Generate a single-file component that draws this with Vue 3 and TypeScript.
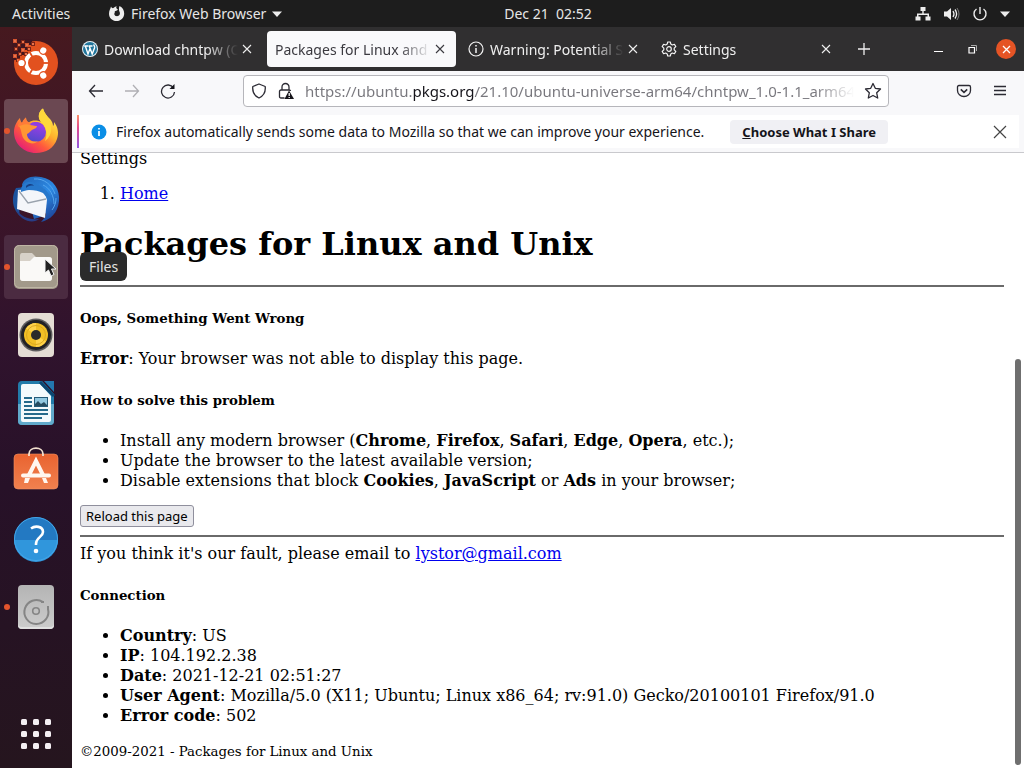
<script setup lang="ts">
import { ref } from 'vue'

interface Tab {
  id: string
  title: string
  icon: 'wordpress' | 'info' | 'gear' | null
}

interface Detail {
  label: string
  value: string
}

const tabs: Tab[] = [
  { id: 'download', title: 'Download chntpw (Offline', icon: 'wordpress' },
  { id: 'packages', title: 'Packages for Linux and Unix', icon: null },
  { id: 'warning', title: 'Warning: Potential Security', icon: 'info' },
  { id: 'settings', title: 'Settings', icon: 'gear' },
]
const activeTab = ref('packages')
const address = ref('https://ubuntu.pkgs.org/21.10/ubuntu-universe-arm64/chntpw_1.0-1.1_arm64.deb.html')

const details: Detail[] = [
  { label: 'Country', value: 'US' },
  { label: 'IP', value: '104.192.2.38' },
  { label: 'Date', value: '2021-12-21 02:51:27' },
  { label: 'User Agent', value: 'Mozilla/5.0 (X11; Ubuntu; Linux x86_64; rv:91.0) Gecko/20100101 Firefox/91.0' },
  { label: 'Error code', value: '502' },
]

const pixels: number[][] = [
  [2, 0], [10, 1], [6, 4], [14, 4], [20, 3], [3, 8], [10, 9], [16, 8], [7, 13], [2, 15], [13, 13], [5, 19],
]
const gridDots: number[] = [0, 12, 24]
const spokes: number[] = [0, 120, 240]
</script>

<template>
  <div class="desktop">
    <header class="topbar">
      <button class="top-item activities">Activities</button>
      <button class="top-item app-menu">
        <svg width="17" height="17" viewBox="0 0 17 17" aria-hidden="true">
          <path d="M3 1.500C3.500 2.500 4 3 5 3.200C6.500 2 8 1.500 8.800 1.300C8 2.300 8.200 3 8.600 3.600L10 4.800L8.300 5.800C7 6 6.500 6.600 6.800 7.500C5.500 9.500 7 11.200 9 11.200C11.500 11.200 12.600 9 11.500 6.800C11 5.500 10.500 3.500 11.500 1C14.500 2.500 16.300 5 16.200 8.700C16 13 12.700 16 8.600 16C4.400 16 1 13 1 8.700C1 5.500 2.500 4 3 1.500Z" fill="#ededed" />
        </svg>
        <span>Firefox Web Browser</span>
        <svg width="10" height="6" viewBox="0 0 10 6" aria-hidden="true"><path d="M0 0.500H10L5 6Z" fill="#ededed" /></svg>
      </button>
      <button class="top-item clock">Dec 21&nbsp; 02:52</button>
      <button class="top-item system" aria-label="System menu">
        <svg width="16" height="16" viewBox="0 0 16 16" fill="#ededed" aria-hidden="true">
          <path d="M5.500 1h5v4h-1.800v2.500H14v3h1.500v4h-5v-4h2V9H3.500v1.500h2v4h-5v-4H2v-3h5.300V5H5.500Z" />
        </svg>
        <svg width="17" height="16" viewBox="0 0 17 16" aria-hidden="true">
          <path d="M1 5.500H4L8 2V14L4 10.500H1Z" fill="#ededed" />
          <path d="M10 5Q12 8 10 11M12 3.500Q15.200 8 12 12.500" fill="none" stroke="#ededed" stroke-width="1.300" />
          <path d="M14 2Q18 8 14 14" fill="none" stroke="#777" stroke-width="1" />
        </svg>
        <svg width="16" height="16" viewBox="0 0 16 16" fill="none" stroke="#ededed" stroke-width="1.400" aria-hidden="true">
          <path d="M8 1V8M4.500 3A6 6 0 1 0 11.500 3" />
        </svg>
        <svg width="10" height="6" viewBox="0 0 10 6" aria-hidden="true"><path d="M0 0.500H10L5 6Z" fill="#ededed" /></svg>
      </button>
    </header>

    <div class="workspace">
      <nav class="dock" aria-label="Dock">
        <button class="tile" aria-label="Ubuntu">
          <svg width="48" height="48" viewBox="0 0 48 48">
            <circle cx="24" cy="24" r="22" fill="#e2511f" />
            <path d="M0 0H20V6H16V11H12V16H8V21H0Z" fill="#42161f" />
            <g v-for="(p, i) in pixels" :key="i">
              <rect :x="p[0] - 1" :y="p[1]" width="4" height="4" :fill="i % 3 === 0 ? '#d3542f' : '#7d2416'" />
              <rect :x="p[0]" :y="p[1] + 1" width="2" height="2" fill="#e8734b" />
            </g>
            <circle cx="24" cy="24" r="10" fill="none" stroke="#fff" stroke-width="4" />
            <g v-for="a in spokes" :key="a" :transform="`rotate(${a} 24 24)`">
              <circle cx="9.500" cy="24" r="4.500" fill="#e2511f" />
              <circle cx="9.500" cy="24" r="3.100" fill="#fff" />
              <path d="M31 24H38" stroke="#e2511f" stroke-width="1.800" />
            </g>
          </svg>
        </button>

        <button class="tile running bright" aria-label="Firefox Web Browser">
          <svg width="48" height="48" viewBox="0 0 48 48">
            <defs>
              <linearGradient id="foxBody" x1=".85" y1=".1" x2=".2" y2=".95">
                <stop offset="0" stop-color="#fff04d" /><stop offset=".38" stop-color="#ffb22c" />
                <stop offset=".67" stop-color="#ff593d" /><stop offset="1" stop-color="#e51c79" />
              </linearGradient>
              <linearGradient id="foxGlobe" x1=".7" y1="0" x2=".4" y2="1">
                <stop offset="0" stop-color="#a63cea" /><stop offset="1" stop-color="#5149cb" />
              </linearGradient>
            </defs>
            <path d="M8 11C8 14 9 15 10 16C11 14 12 12 14 10.500C14 13 15 15 17 15.500C20 13 25 13 29 15C25 10 27 4 31 1.500C32 6 35 9 38 12C40 14 41 17 41 19C42 18 42 17 42 15C46 20 47 26 45 32C42 41 34 46 24 46C12 46 2 37 2 25C2 19 5 14 8 11Z" fill="url(#foxBody)" />
            <circle cx="24" cy="25" r="10" fill="url(#foxGlobe)" />
            <path d="M6 18C10 15 15 15 18 18L25 19C25 21 22 22 20 23C18 24 18 26 15 27C15 33 21 36 26 34C22 39 12 36 10 28C9 24 9 21 6 18Z" fill="#ff9634" />
            <path d="M29 15C25 10 27 4 31 1.500C32 7 39 11 39 20C40 26 37 31 33 34C36 27 34 19 29 15Z" fill="#ffd83b" />
            <path d="M8 11C8 14 9 15 10 16C11 14 12 12 14 10.500C14 13 15 15 17 15.500L19 18C13 16 9 18 6 20Z" fill="#ff7b38" />
            <path d="M18 17C21 14 28 14 32 19C28 17 26 19 25 19Z" fill="#8e3fe0" />
          </svg>
        </button>

        <button class="tile" aria-label="Thunderbird Mail">
          <svg width="48" height="48" viewBox="0 0 48 48">
            <defs>
              <linearGradient id="birdBody" x1=".2" y1="0" x2=".8" y2="1">
                <stop offset="0" stop-color="#2369bc" /><stop offset=".45" stop-color="#2d8ae4" /><stop offset="1" stop-color="#1c3f93" />
              </linearGradient>
            </defs>
            <path d="M4 13C-1 22 0 34 8 41C6 34 8 20 14 12Z" fill="#1c539d" />
            <path d="M10 10C11 3 20 0 29 2C42 4 48 15 47 26C46 38 38 45 29 47C33 43 34 41 34 38C31 41 27 43 22 44L14 15Z" fill="url(#birdBody)" />
            <path d="M4 34C9 42 17 45 27 44C22 49 8 47 4 34Z" fill="#283d86" />
            <path d="M6 15L31 13L35 25L33 43L5 34Z" fill="#f4f6fa" />
            <path d="M7 16L16 28L34 24" fill="none" stroke="#99a2ad" stroke-width="1.300" />
            <path d="M9 17C8 8 18 4 24 9C32 12 38 17 40 28C36 23 34 22 31 18C27 16 23 15 17 15C14 15 12 16 9 17Z" fill="#2778cc" />
            <path d="M14 11C17 8 21 9 22 11C19 10 16 11 14 13Z" fill="#163f85" />
            <path d="M22 4C32 3 40 10 43 19M31 10C38 13 42 21 42 29M40 35C43 31 44 27 44 23" fill="none" stroke="#55a6ef" stroke-width="1" />
          </svg>
        </button>

        <button class="tile running hovered" aria-label="Files" aria-describedby="files-tip">
          <svg width="48" height="48" viewBox="0 0 48 48">
            <rect x="2" y="2" width="44" height="44" rx="5" fill="#a2998a" />
            <rect x="2.500" y="2.500" width="43" height="42" rx="5" fill="none" stroke="#bfb6a5" />
            <path d="M8 13Q8 10 10 10H20L24 14H37Q40 14 40 17V35Q40 38 37 38H11Q8 38 8 35Z" fill="#d7d1c8" />
            <path d="M8 18H18L22 14H37Q40 14 40 17V35Q40 38 37 38H11Q8 38 8 35Z" fill="#faf9f7" />
          </svg>
          <span id="files-tip" class="tooltip" role="tooltip">Files</span>
          <svg class="pointer" width="13" height="19" viewBox="0 0 13 19" aria-hidden="true">
            <path d="M1 1V15L4.500 12L7 18L10 16.500L7.500 11H12Z" fill="#222" stroke="#f4f4f4" stroke-width="1" />
          </svg>
        </button>

        <button class="tile" aria-label="Rhythmbox">
          <svg width="48" height="48" viewBox="0 0 48 48">
            <rect x="6" y="2" width="36" height="44" rx="4" fill="#e4ddd4" />
            <circle cx="24" cy="24" r="16.500" fill="#5d5c5d" /><circle cx="24" cy="24" r="15" fill="#222225" />
            <circle cx="24" cy="24" r="12" fill="#f1bf25" />
            <path d="M24 24L14 17.500A12 12 0 0 1 24 12ZM24 24L34 30.500A12 12 0 0 1 24 36Z" fill="#ffd34a" />
            <circle cx="24" cy="24" r="9.500" fill="none" stroke="#dba91f" />
            <circle cx="24" cy="24" r="5" fill="#2b2a2a" />
          </svg>
        </button>

        <button class="tile" aria-label="LibreOffice Writer">
          <svg width="48" height="48" viewBox="0 0 48 48">
            <path d="M10 2H30L42 15V42Q42 46 38 46H10Q6 46 6 42V6Q6 2 10 2Z" fill="#227baa" />
            <path d="M6 25H42V42Q42 46 38 46H10Q6 46 6 42Z" fill="#61aacb" />
            <path d="M32 2H42V13Z" fill="#2377ae" />
            <path d="M9 7Q9 5 11 5H28L39 17V41Q39 43 37 43H11Q9 43 9 41Z" fill="#f4fafc" />
            <path d="M28 3L42 17" stroke="#0c4670" stroke-width="3" />
            <path d="M12 19H20M12 23H20M12 27H20M12 31H36M12 35H36M12 39H30" stroke="#266a8b" stroke-width="2" />
            <rect x="22.500" y="18.500" width="13" height="9" fill="#92c9e1" stroke="#255b78" />
            <path d="M23 27V25L26 22L29 25L32 23L35 26V27Z" fill="#264d61" />
          </svg>
        </button>

        <button class="tile" aria-label="Ubuntu Software">
          <svg width="48" height="48" viewBox="0 0 48 48">
            <defs><linearGradient id="bag" x1="0" y1="0" x2="0" y2="1"><stop offset="0" stop-color="#e96330" /><stop offset="1" stop-color="#f0814f" /></linearGradient></defs>
            <rect x="2" y="7" width="44" height="35" rx="4" fill="url(#bag)" stroke="#f29162" stroke-width=".6" />
            <path d="M17 9V7C17 -.8 31 -.8 31 7V9" fill="none" stroke="#f1dfcd" stroke-width="1.800" />
            <path d="M17 28L24 14L31 28" fill="none" stroke="#fff7f0" stroke-width="4" />
            <path d="M11 28.500H37" stroke="#fff7f0" stroke-width="4" stroke-linecap="round" />
            <path d="M13 31L12 36H16L18 31ZM30 31L32 36H36L34 31Z" fill="#fff7f0" />
          </svg>
        </button>

        <button class="tile" aria-label="Help">
          <svg width="48" height="48" viewBox="0 0 48 48">
            <circle cx="24" cy="24" r="22" fill="#2379c2" />
            <path d="M2 25H46A22 22 0 0 1 2 25Z" fill="#3096dc" />
            <circle cx="24" cy="24" r="21.500" fill="none" stroke="#43a6e8" />
            <path d="M19 13.500C23 10.500 31 11 31 17C31 22 24 22 24 29V30" fill="none" stroke="#fff" stroke-width="2.600" />
            <circle cx="24" cy="36" r="2.300" fill="#fff" />
          </svg>
        </button>

        <button class="tile running" aria-label="Disk">
          <svg width="48" height="48" viewBox="0 0 48 48">
            <defs><linearGradient id="disk" x1="0" y1="0" x2="0" y2="1"><stop offset="0" stop-color="#b4b4b4" /><stop offset="1" stop-color="#cccccc" /></linearGradient></defs>
            <rect x="6" y="2" width="36" height="44" rx="4" fill="url(#disk)" />
            <path d="M6 40V42Q6 46 10 46H38Q42 46 42 42V40Q42 44 38 44H10Q6 44 6 40Z" fill="#e0e0e0" />
            <path d="M31 19A12 12 0 1 0 36 26" fill="none" stroke="#858585" stroke-width="2" />
            <path d="M29 19H32M36 23V27" fill="none" stroke="#858585" stroke-width="2" />
            <circle cx="24" cy="28" r="3.300" fill="none" stroke="#858585" stroke-width="1.600" />
          </svg>
        </button>

        <button class="tile show-apps" aria-label="Show Applications">
          <svg width="30" height="30" viewBox="0 0 30 30" fill="#f4eff3">
            <template v-for="y in gridDots" :key="y">
              <rect v-for="x in gridDots" :key="x" :x="x" :y="y" width="6" height="6" rx="1.500" />
            </template>
          </svg>
        </button>
      </nav>

      <div class="browser">
        <div class="tabbar">
          <div class="tabs" role="tablist">
            <div v-for="tab in tabs" :key="tab.id" class="tab" :class="{ active: tab.id === activeTab }">
              <button class="tab-label" role="tab" :aria-selected="tab.id === activeTab" @click="activeTab = tab.id">
                <svg v-if="tab.icon === 'wordpress'" width="16" height="16" viewBox="0 0 16 16">
                  <circle cx="8" cy="8" r="8" fill="#eaf3f8" />
                  <circle cx="8" cy="8" r="7" fill="#21759b" />
                  <path d="M2.200 5H6M6.400 5H10.500M3.300 5L6 13L8.200 7M7.200 5L10.200 13L12.600 6.800C13 5.500 12 4.500 11.600 3.500" fill="none" stroke="#fff" stroke-width="1.400" />
                </svg>
                <svg v-else-if="tab.icon === 'info'" width="16" height="16" viewBox="0 0 16 16">
                  <circle cx="8" cy="8" r="7" fill="none" stroke="#f4f4f4" stroke-width="1.200" />
                  <path d="M8 7V12M8 4V5.600" stroke="#f4f4f4" stroke-width="1.500" />
                </svg>
                <svg v-else-if="tab.icon === 'gear'" width="16" height="16" viewBox="0 0 16 16" fill="none" stroke="#f4f4f4" stroke-width="1.200">
                  <path d="M6.700 1H9.300L9.800 3.100L11.300 4L13.400 3.300L14.800 5.600L13.200 7.200V8.800L14.800 10.400L13.400 12.700L11.300 12L9.800 12.900L9.300 15H6.700L6.200 12.900L4.700 12L2.600 12.700L1.200 10.400L2.800 8.800V7.200L1.200 5.600L2.600 3.300L4.700 4L6.200 3.100Z" stroke-linejoin="round" />
                  <circle cx="8" cy="8" r="2.300" />
                </svg>
                <span class="tab-title">{{ tab.title }}</span>
              </button>
              <button class="tab-close" :aria-label="`Close ${tab.title}`">
                <svg width="10" height="10" viewBox="0 0 10 10"><path d="M1 1L9 9M9 1L1 9" stroke="currentColor" stroke-width="1.100" /></svg>
              </button>
            </div>
            <button class="new-tab" aria-label="New tab">
              <svg width="14" height="14" viewBox="0 0 14 14"><path d="M7 1V13M1 7H13" stroke="currentColor" stroke-width="1.300" /></svg>
            </button>
          </div>
          <div class="window-controls">
            <button aria-label="Minimize"><svg width="9" height="9" viewBox="0 0 9 9"><path d="M0 6.500H9" stroke="#fff" stroke-width="1" /></svg></button>
            <button aria-label="Restore">
              <svg width="9" height="9" viewBox="0 0 9 9" fill="none"><path d="M1 2.500H6.500V8H1Z" stroke="#fff" stroke-width="1.200" /><path d="M3 .5H8.500V6" stroke="#aaa" stroke-width="1" /></svg>
            </button>
            <button class="close" aria-label="Close window"><svg width="9" height="9" viewBox="0 0 9 9"><path d="M1 1L8 8M8 1L1 8" stroke="#fff" stroke-width="1.300" /></svg></button>
          </div>
        </div>

        <div class="toolbar">
          <div class="nav-buttons">
            <button aria-label="Back"><svg width="16" height="16" viewBox="0 0 16 16"><path d="M7 2L1.500 8L7 14M1.500 8H15" /></svg></button>
            <button aria-label="Forward" disabled><svg width="16" height="16" viewBox="0 0 16 16"><path d="M9 2L14.500 8L9 14M14.500 8H1" /></svg></button>
            <button aria-label="Reload"><svg width="16" height="16" viewBox="0 0 16 16"><path d="M13.500 5A6.500 6.500 0 1 0 14.500 9" /><path d="M14.500 1V6H9.500Z" class="solid" /></svg></button>
          </div>
          <div class="urlbar">
            <button aria-label="Tracking protection"><svg width="16" height="16" viewBox="0 0 16 16"><path d="M8 1L14.200 3.500C14.800 9 12.500 13 8 15C3.500 13 1.200 9 1.800 3.500Z" stroke-linejoin="round" /></svg></button>
            <button aria-label="Site security">
              <svg width="18" height="18" viewBox="0 0 18 18">
                <path d="M5 8V5A3.500 3.500 0 0 1 12 5V8M7.500 16H4Q2.500 16 2.500 14.500V9.500Q2.500 8 4 8H12Q13.500 8 13.500 9" />
                <path d="M12 8.500L17 17H7.500Z" class="solid" />
                <path d="M12.200 11V14M12.200 15V16" class="bang" />
              </svg>
            </button>
            <input v-model="address" type="text" aria-label="Address" spellcheck="false" />
            <button aria-label="Bookmark this page"><svg width="18" height="18" viewBox="0 0 18 18"><path d="M9 1.500L11.300 6.300L16.500 7L12.700 10.800L13.700 16L9 13.500L4.300 16L5.300 10.800L1.500 7L6.700 6.300Z" stroke-linejoin="round" /></svg></button>
          </div>
          <div class="tools">
            <button aria-label="Save to Pocket"><svg width="16" height="16" viewBox="0 0 16 16"><path d="M3 2.500H13Q14.500 2.500 14.500 4V7.500A6.500 6 0 0 1 1.500 7.500V4Q1.500 2.500 3 2.500Z" /><path d="M4.800 6.300L8 9.300L11.200 6.300" stroke-width="1.600" /></svg></button>
            <button aria-label="Application menu"><svg width="14" height="16" viewBox="0 0 14 16"><path d="M1 3.500H13M1 7.500H13M1 11.500H13" /></svg></button>
          </div>
        </div>

        <div class="notice-wrap">
          <div class="notice" role="status">
            <svg width="16" height="16" viewBox="0 0 16 16"><circle cx="8" cy="8" r="7.500" fill="#0a8ee6" /><path d="M8 7V12M8 4V5.600" stroke="#fff" stroke-width="1.700" /></svg>
            <span class="notice-text">Firefox automatically sends some data to Mozilla so that we can improve your experience.</span>
            <button class="choose"><u>C</u>hoose What I Share</button>
            <button class="dismiss" aria-label="Dismiss"><svg width="14" height="14" viewBox="0 0 14 14"><path d="M1 1L13 13M13 1L1 13" stroke="#444" stroke-width="1.200" /></svg></button>
          </div>
        </div>

        <div class="viewport">
          <main class="page">
            <div>Settings</div>
            <ol class="crumbs"><li><a href="#home">Home</a></li></ol>
            <h1>Packages for Linux and Unix</h1>
            <hr>
            <h5>Oops, Something Went Wrong</h5>
            <p><b>Error</b>: Your browser was not able to display this page.</p>
            <h5>How to solve this problem</h5>
            <ul>
              <li>Install any modern browser (<b>Chrome</b>, <b>Firefox</b>, <b>Safari</b>, <b>Edge</b>, <b>Opera</b>, etc.);</li>
              <li>Update the browser to the latest available version;</li>
              <li>Disable extensions that block <b>Cookies</b>, <b>JavaScript</b> or <b>Ads</b> in your browser;</li>
            </ul>
            <button class="reload">Reload this page</button>
            <hr>
            <div class="contact">If you think it's our fault, please email to <a href="mailto:lystor@gmail.com">lystor@gmail.com</a></div>
            <h5>Connection</h5>
            <ul>
              <li v-for="d in details" :key="d.label"><b>{{ d.label }}</b>: {{ d.value }}</li>
            </ul>
            <small>©2009-2021 - Packages for Linux and Unix</small>
          </main>
          <div class="scroll-track"><div class="scroll-thumb"></div></div>
        </div>
      </div>
    </div>
  </div>
</template>

<style>
body {
  margin: 0;
}
</style>

<style scoped>
.desktop {
  display: flex;
  flex-direction: column;
  height: 100vh;
  overflow: hidden;
  font-family: "Noto Sans", "Open Sans", sans-serif;
  font-size: 14px;
  color: #15141a;
}
button {
  font: inherit;
  color: inherit;
  border: 0;
  padding: 0;
  background: none;
}
svg {
  display: block;
  flex: none;
}

.topbar {
  display: grid;
  grid-template-columns: 1fr auto 1fr;
  grid-template-areas: "left clock right";
  align-items: center;
  height: 27px;
  flex: none;
  background: #1d1d1d;
  color: #e6e6e6;
}
.top-item {
  display: flex;
  align-items: center;
}
.activities {
  grid-area: left;
  justify-self: start;
  margin-left: 12px;
}
.app-menu {
  grid-area: left;
  justify-self: start;
  gap: 6px;
  margin-left: 108px;
  white-space: nowrap;
}
.clock {
  grid-area: clock;
  margin-left: 72px;
}
.system {
  grid-area: right;
  justify-self: end;
  gap: 12px;
  margin-right: 14px;
}

.workspace {
  display: flex;
  flex: 1;
  min-height: 0;
}
.dock {
  display: flex;
  flex-direction: column;
  align-items: center;
  gap: 4px;
  width: 72px;
  flex: none;
  box-sizing: border-box;
  padding: 4px 0 2px;
  background: linear-gradient(#46191f, #3d1528 22%, #30132d 42%, #271128 62%, #25151e);
}
.tile {
  position: relative;
  display: flex;
  align-items: center;
  justify-content: center;
  width: 64px;
  height: 64px;
  flex: none;
  border-radius: 4px;
}
.bright {
  background: #6b4852;
}
.hovered {
  background: #4b2b41;
}
.show-apps {
  margin-top: auto;
}
.running::before {
  content: "";
  position: absolute;
  left: 0;
  top: 29px;
  width: 6px;
  height: 6px;
  border-radius: 50%;
  background: #e2542d;
}
.tooltip {
  position: absolute;
  left: 76px;
  top: 17px;
  z-index: 5;
  padding: 0 9px;
  line-height: 29px;
  border-radius: 6px;
  background: #2b2b2b;
  color: #e3e3e3;
}
.pointer {
  position: absolute;
  left: 40px;
  top: 23px;
}

.browser {
  display: flex;
  flex-direction: column;
  flex: 1;
  min-width: 0;
  background: #f8f8fa;
}
.tabbar {
  display: flex;
  justify-content: space-between;
  height: 44px;
  flex: none;
  box-sizing: border-box;
  padding: 4px 8px 4px 2px;
  background: #302f30;
  color: #efefef;
}
.tabs {
  display: flex;
  gap: 4px;
  flex: 1;
  min-width: 0;
}
.tab {
  display: flex;
  align-items: center;
  gap: 4px;
  flex: 0 1 189px;
  min-width: 0;
  box-sizing: border-box;
  padding: 0 11px 0 8px;
  border-radius: 4px;
}
.tab.active {
  background: #f9f9fb;
  color: #3b3a40;
}
.tab-label {
  display: flex;
  align-items: center;
  gap: 6px;
  flex: 1;
  min-width: 0;
  height: 100%;
}
.tab-title {
  flex: 1;
  overflow: hidden;
  white-space: nowrap;
  text-align: left;
  mask-image: linear-gradient(to left, transparent, #000 32px);
}
.new-tab {
  width: 36px;
  display: grid;
  place-items: center;
}
.window-controls {
  display: flex;
  align-items: center;
  gap: 14px;
}
.window-controls button {
  display: grid;
  place-items: center;
  width: 20px;
  height: 20px;
}
.window-controls .close {
  border-radius: 50%;
  background: #e55425;
}

.toolbar {
  display: flex;
  align-items: center;
  height: 42px;
  flex: none;
  box-sizing: border-box;
  padding: 0 17px 2px 16px;
}
.toolbar button {
  flex: none;
}
.toolbar svg {
  fill: none;
  stroke: #2b2a33;
  stroke-width: 1.3;
}
.toolbar svg .solid {
  fill: #15141a;
  stroke: none;
}
.toolbar svg .bang {
  stroke: #fff;
}
.nav-buttons {
  display: flex;
  gap: 20px;
  margin-right: 67px;
}
.nav-buttons button:disabled {
  opacity: 0.35;
}
.urlbar {
  display: flex;
  align-items: center;
  gap: 10px;
  flex: 1;
  min-width: 0;
  box-sizing: border-box;
  height: 32px;
  padding: 0 6px 0 7px;
  border: 1px solid #b6b6bb;
  border-radius: 4px;
  background: #fff;
}
.urlbar input {
  flex: 1;
  min-width: 0;
  height: 28px;
  padding: 0;
  border: 0;
  outline: 0;
  font: inherit;
  font-size: 15px;
  color: transparent;
  background: linear-gradient(to right, #77767c 107px, #15141a 107px, #15141a 169px, #77767c 169px, #77767c calc(100% - 40px), transparent);
  background-clip: text;
  -webkit-background-clip: text;
}
.tools {
  display: flex;
  gap: 21px;
  margin-left: 67px;
}

.notice-wrap {
  flex: none;
  padding: 2px 5px 4px;
  border-bottom: 1px solid #c9c9cd;
}
.notice {
  display: flex;
  align-items: center;
  height: 33px;
  padding: 0 12px;
  border-left: 2px solid;
  border-image: linear-gradient(#ff9465, #e0498e 40%, #9059e8) 1;
  background: #fff;
}
.notice-text {
  margin: 0 26px 0 9px;
  white-space: nowrap;
}
.choose {
  padding: 0 12px;
  line-height: 24px;
  border-radius: 4px;
  background: #f0f0f4;
  font-size: 13px;
  font-weight: 700;
  white-space: nowrap;
}
.dismiss {
  margin-left: auto;
}

.viewport {
  display: flex;
  flex: 1;
  min-height: 0;
  overflow: hidden;
  background: #fff;
}
.page {
  flex: 1;
  min-width: 0;
  margin-top: -4px;
  padding: 0 8px;
  font: 16px/20px "DejaVu Serif", serif;
  color: #000;
}
.page ol,
.page ul {
  margin: 0;
  padding-left: 40px;
}
.page .crumbs {
  margin: 15px 0 21px;
}
.page a {
  color: #0000ee;
}
h1 {
  margin: 0 0 22px;
  font-size: 32px;
  line-height: 38px;
}
hr {
  margin: 0;
  border: 0;
  height: 2px;
  background: #6a6a6a;
}
h5 {
  margin: 23px 0;
  font-size: smaller;
  line-height: 16px;
}
p {
  margin: 0;
}
.reload {
  display: block;
  margin: 14px 0 8px;
  padding: 0 5px;
  border: 1px solid #8f8f9d;
  border-radius: 3px;
  background: #e9e9ed;
  font: 13px/20px "Noto Sans", sans-serif;
}
.contact {
  margin-top: 7px;
}
small {
  display: block;
  margin-top: 16px;
  font-size: smaller;
}
.scroll-track {
  display: flex;
  align-items: flex-end;
  width: 12px;
  flex: none;
}
.scroll-thumb {
  width: 6px;
  height: 66%;
  margin: 0 0 3px 3px;
  border-radius: 3px;
  background: #6f6f6f;
}
</style>
